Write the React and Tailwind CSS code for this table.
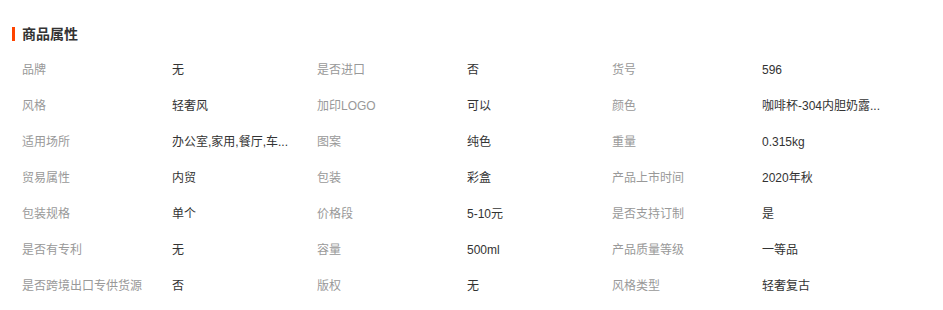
const attrs = [
    ["品牌", "无"], ["是否进口", "否"], ["货号", "596"],
    ["风格", "轻奢风"], ["加印LOGO", "可以"], ["颜色", "咖啡杯-304内胆奶露..."],
    ["适用场所", "办公室,家用,餐厅,车..."], ["图案", "纯色"], ["重量", "0.315kg"],
    ["贸易属性", "内贸"], ["包装", "彩盒"], ["产品上市时间", "2020年秋"],
    ["包装规格", "单个"], ["价格段", "5-10元"], ["是否支持订制", "是"],
    ["是否有专利", "无"], ["容量", "500ml"], ["产品质量等级", "一等品"],
    ["是否跨境出口专供货源", "否"], ["版权", "无"], ["风格类型", "轻奢复古"],
]

function App()
{
    return(
        <div className="w-[943px] h-[310px] bg-white pt-[24px] pl-[12px] font-['Liberation_Sans','Noto_Sans_CJK_SC',sans-serif]">
            <div className="flex items-center h-[20px]">
                <div className="w-[3px] h-[14px] bg-[#ff4400]"></div>
                <h2 className="ml-[7px] text-[14px] font-bold text-[#333]">商品属性</h2>
            </div>
            <div className="grid grid-cols-[295px_295px_295px] mt-[8px] pl-[10px]">
                {
                    attrs.map((item, index) =>
                    {
                        return(<div key={index} className="flex items-center h-[36px] text-[12px]">
                            <span className="w-[150px] text-[#999] whitespace-nowrap">{item[0]}</span>
                            <span className="text-[#333] whitespace-nowrap">{item[1]}</span>
                        </div>)
                    })
                }
            </div>
        </div>
    )
}

export default App
